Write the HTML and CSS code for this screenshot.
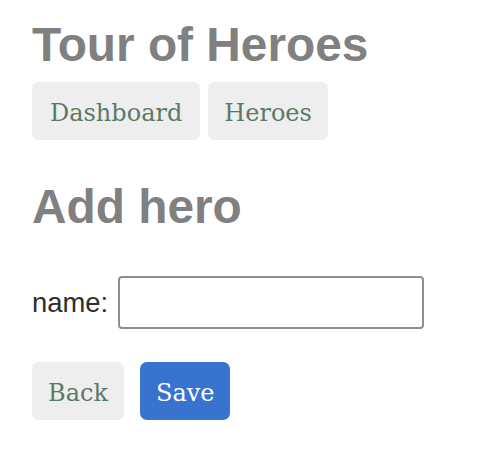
FILE: index.html
```html
<!DOCTYPE html>
<html lang="en">
<head>
<meta charset="utf-8">
<title>Tour of Heroes</title>
<link rel="stylesheet" href="styles.css">
</head>
<body>
<div class="app">
  <h1 class="title">Tour of Heroes</h1>
  <nav class="nav">
    <a class="nav-link" href="#">Dashboard</a>
    <a class="nav-link" href="#">Heroes</a>
  </nav>
  <h2 class="subtitle">Add hero</h2>
  <div class="field">
    <label class="field-label" for="name">name:</label>
    <input class="field-input" id="name" type="text">
  </div>
  <div class="actions">
    <button class="btn" type="button">Back</button>
    <button class="btn btn-primary" type="button">Save</button>
  </div>
</div>
</body>
</html>
```

FILE: styles.css
```css
html, body {
  margin: 0;
  padding: 0;
  background: #ffffff;
}

.app {
  padding: 18px 32px 0 32px;
  display: flex;
  flex-direction: column;
  align-items: flex-start;
}

.title,
.subtitle {
  margin: 0;
  font-family: "Liberation Sans", Arial, sans-serif;
  font-weight: bold;
  font-size: 47.8px;
  line-height: 54px;
  color: #808080;
}

.nav {
  display: flex;
  gap: 8px;
  margin-top: 10px;
}

.nav-link,
.btn {
  display: inline-block;
  box-sizing: border-box;
  height: 58px;
  padding: 4px 16px 0 16px;
  border: none;
  border-radius: 7px;
  background: #eeeeee;
  color: #5b7a66;
  font-family: "DejaVu Serif", Georgia, serif;
  font-size: 24px;
  line-height: 54px;
  text-decoration: none;
}

.nav-link:first-child {
  padding-left: 18px;
  padding-right: 18px;
}

.subtitle {
  margin-top: 40px;
}

.field {
  display: flex;
  align-items: center;
  gap: 10px;
  margin-top: 42px;
}

.field-label {
  font-family: "Liberation Sans", Arial, sans-serif;
  font-size: 27.4px;
  color: #2e2e2e;
}

.field-input {
  box-sizing: border-box;
  width: 306px;
  height: 53px;
  margin: 0;
  border: 2px solid #8d8c99;
  border-radius: 4px;
  background: #ffffff;
  font-size: 24px;
  padding: 0 8px;
}

.actions {
  display: flex;
  gap: 16px;
  margin-top: 33px;
}

.btn {
  cursor: pointer;
}

.btn-primary {
  background: #3874cf;
  color: #ffffff;
}
```
